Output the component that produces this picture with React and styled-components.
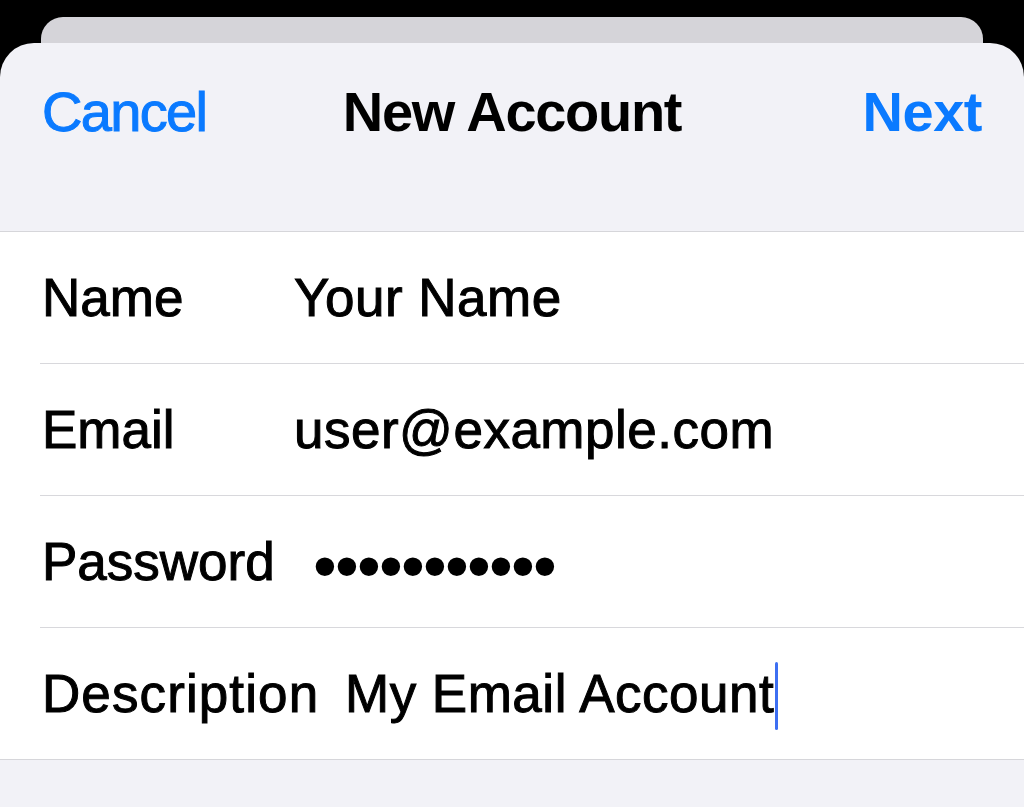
import React from "react";
import styled, { createGlobalStyle } from "styled-components";

const GlobalStyle = createGlobalStyle`
  html, body {
    margin: 0;
    padding: 0;
    background: #000;
  }
  body {
    font-family: "Liberation Sans", Arial, sans-serif;
    -webkit-font-smoothing: antialiased;
  }
`;

const Screen = styled.div`
  width: 1024px;
  height: 807px;
  overflow: hidden;
  background: #000;
  padding-top: 17px;
  box-sizing: border-box;
  display: flex;
  flex-direction: column;
`;

const BackCard = styled.div`
  height: 26px;
  margin: 0 41px 0 41px;
  background: #d5d4d9;
  border-radius: 22px 22px 0 0;
  flex-shrink: 0;
`;

const Sheet = styled.div`
  flex: 1;
  background: #f2f2f7;
  border-radius: 34px 34px 0 0;
  display: flex;
  flex-direction: column;
`;

const Header = styled.div`
  height: 188px;
  box-sizing: border-box;
  padding-bottom: 52px;
  display: flex;
  flex-direction: column;
`;

const NavBar = styled.div`
  height: 136px;
  display: grid;
  grid-template-columns: 1fr auto 1fr;
  align-items: center;
  padding: 0 42px;
`;

const NavButton = styled.div`
  font-size: 56px;
  color: #0a7aff;
  font-weight: ${(p) => (p.bold ? 700 : 400)};
  letter-spacing: ${(p) => (p.bold ? "-0.5px" : "-1.7px")};
  -webkit-text-stroke: ${(p) => (p.bold ? "0" : "1px")} currentColor;
  justify-self: ${(p) => (p.right ? "end" : "start")};
`;

const Title = styled.div`
  font-size: 56px;
  font-weight: 700;
  color: #000;
  letter-spacing: -1.3px;
`;

const List = styled.div`
  background: #fff;
  border-top: 1px solid #d6d6da;
  border-bottom: 1px solid #d6d6da;
`;

const Row = styled.div`
  margin-left: 40px;
  padding-left: 2px;
  height: 131px;
  display: flex;
  align-items: center;
  border-bottom: ${(p) => (p.last ? "none" : "1px solid #d8d8dc")};
  font-size: 53px;
  color: #000;
  -webkit-text-stroke: 1px currentColor;
`;

const Label = styled.div`
  width: ${(p) => p.width}px;
  flex-shrink: 0;
  letter-spacing: ${(p) => p.spacing || "0px"};
`;

const Value = styled.div`
  display: flex;
  align-items: center;
  white-space: nowrap;
  letter-spacing: 0.5px;
`;

const Dots = styled.div`
  font-size: 68px;
  letter-spacing: -1.8px;
  line-height: 1;
  margin-top: 6px;
  -webkit-text-stroke: 0;
`;

const Caret = styled.span`
  display: inline-block;
  width: 3px;
  height: 68px;
  border-radius: 2px;
  background: #3d6ff2;
  margin-left: 1px;
  margin-top: 4px;
`;

const fields = [
  { label: "Name", value: "Your Name", width: 252 },
  { label: "Email", value: "user@example.com", width: 252 },
  { label: "Password", value: "•••••••••••", width: 271, secret: true },
  { label: "Description", value: "My Email Account", width: 303, spacing: "1.1px", focused: true },
];

export default function App() {
  return (
    <>
      <GlobalStyle />
      <Screen>
        <BackCard />
        <Sheet>
          <Header>
            <NavBar>
              <NavButton>Cancel</NavButton>
              <Title>New Account</Title>
              <NavButton bold right>
                Next
              </NavButton>
            </NavBar>
          </Header>
          <List>
            {fields.map((f, i) => (
              <Row key={f.label} last={i === fields.length - 1}>
                <Label width={f.width} spacing={f.spacing}>
                  {f.label}
                </Label>
                <Value>
                  {f.secret ? <Dots>{f.value}</Dots> : f.value}
                  {f.focused && <Caret />}
                </Value>
              </Row>
            ))}
          </List>
        </Sheet>
      </Screen>
    </>
  );
}
